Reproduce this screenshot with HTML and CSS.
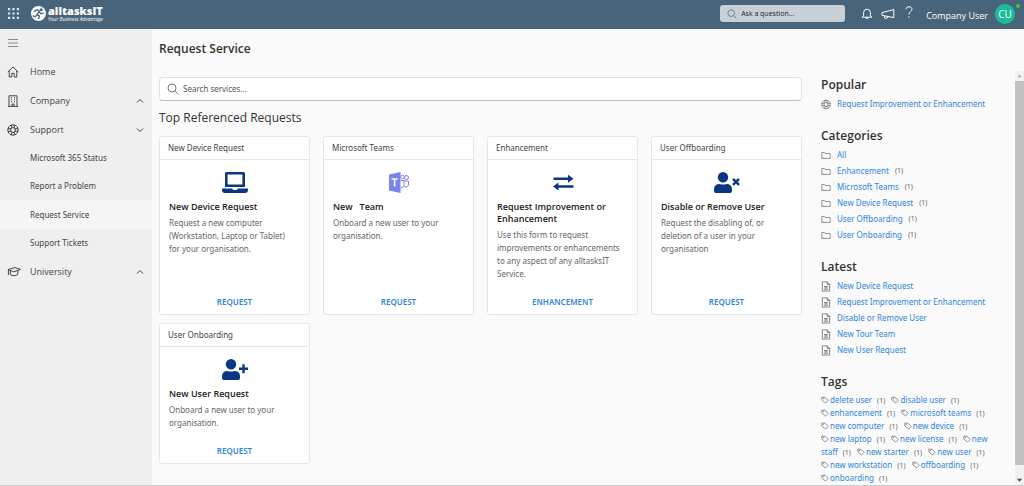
FILE: index.html
```
<!DOCTYPE html>
<html lang="en">
<head>
<meta charset="utf-8">
<title>Request Service</title>
<link rel="stylesheet" href="styles.css">
</head>
<body>
<svg class="sprite" aria-hidden="true">
  <symbol id="i-search" viewBox="0 0 12 12"><circle cx="5" cy="5" r="4"/><path d="M8 8l3.3 3.3"/></symbol>
  <symbol id="i-up" viewBox="0 0 8 8"><path d="M1 5.5l3-3 3 3"/></symbol>
  <symbol id="i-down" viewBox="0 0 8 8"><path d="M1 2.5l3 3 3-3"/></symbol>
  <symbol id="i-ring" viewBox="0 0 12 12"><circle cx="6" cy="6" r="5.2"/><circle cx="6" cy="6" r="2.4"/><path d="M4.7 1v3M7.3 1v3M4.7 8v3M7.3 8v3M1 4.7h3M1 7.3h3M8 4.7h3M8 7.3h3"/></symbol>
  <symbol id="i-folder" viewBox="0 0 12 10"><path d="M1 8.5v-7h3.6l1 1.2H11v5.8z"/></symbol>
  <symbol id="i-doc" viewBox="0 0 10 12"><path d="M1 1h5.5L9 3.5V11H1zM6.3 1v2.7H9M3 6h4M3 7.5h4M3 9h4"/></symbol>
  <symbol id="i-tag" viewBox="0 0 10 10"><path d="M1 1.5h4l4 4-3.3 3.3L1 5z"/><circle cx="3" cy="3.3" r=".4"/></symbol>
</svg>

<header class="topbar">
  <button class="plain" aria-label="Apps">
    <svg class="apps" viewBox="0 0 12 12"><path d="M0 0h2.4v2.4H0zM4.8 0h2.4v2.4H4.8zM9.6 0H12v2.4H9.6zM0 4.8h2.4v2.4H0zM4.8 4.8h2.4v2.4H4.8zM9.6 4.8H12v2.4H9.6zM0 9.6h2.4V12H0zM4.8 9.6h2.4V12H4.8zM9.6 9.6H12V12H9.6z"/></svg>
  </button>
  <a class="brand" href="#">
    <svg class="brand-mark" viewBox="0 0 16 16"><circle class="disc" cx="8" cy="8" r="8"/><circle class="head" cx="10.800" cy="4" r="1.700"/><path d="M3 6l3.500-2 2.800 2M8.800 6L6.500 9.200 9 10.800 8 13.800M6.500 9.500L4.200 11.500 2 10.200M9 6.500l1.800 1.800 2.800-1"/></svg>
    <span class="brand-text"><b>alltasksIT</b><i>Your Business Advantage</i></span>
  </a>
  <label class="ask"><svg class="line"><use href="#i-search"/></svg><input type="text" placeholder="Ask a question..." aria-label="Ask a question"></label>
  <div class="tools">
    <button class="plain" aria-label="Notifications"><svg class="line" viewBox="0 0 12 12"><path d="M1.2 9.2h9.6L9.4 7.4V4.6a3.4 3.4 0 0 0-6.8 0v2.8zM4.8 9.4a1.2 1.2 0 0 0 2.400 0"/></svg></button>
    <button class="plain" aria-label="Announcements"><svg class="line wide" viewBox="0 0 14 12"><path d="M1 4.6L12.8 1.6v8L1 7.300zM3.300 8l.8 2.700 3.200-1.500"/></svg></button>
    <button class="plain" aria-label="Help"><svg class="line help" viewBox="0 0 8 12"><path d="M1 3.2C1 1.6 2.3.8 4 .8s3 .9 3 2.500C7 5.4 4 5.6 4 8.4M4 10.2v1.4"/></svg></button>
  </div>
  <a class="user" href="#">Company User</a>
  <span class="avatar">CU<span class="online"></span></span>
</header>

<div class="shell">
  <nav class="side">
    <button class="plain burger" aria-label="Menu"><svg class="line" viewBox="0 0 10 10"><path d="M0 1.5h10M0 5h10M0 8.500h10"/></svg></button>
    <a class="item" href="#"><svg class="line" viewBox="0 0 12 12"><path d="M.8 6L6 1l5.2 5M2.2 5v6h2.6V7.3h2.4V11h2.6V5"/></svg><span>Home</span></a>
    <a class="item" href="#"><svg class="line" viewBox="0 0 12 12"><path d="M2 11.5V.8h8v10.7M1 11.4h10M4 2.8h1M7 2.8h1M4 4.8h1M7 4.8h1M4 6.8h1M7 6.8h1M5 11.4V9h2v2.4"/></svg><span>Company</span><svg class="line chev"><use href="#i-up"/></svg></a>
    <a class="item" href="#"><svg class="line"><use href="#i-ring"/></svg><span>Support</span><svg class="line chev"><use href="#i-down"/></svg></a>
    <a class="item sub" href="#">Microsoft 365 Status</a>
    <a class="item sub" href="#">Report a Problem</a>
    <a class="item sub active" href="#">Request Service</a>
    <a class="item sub" href="#">Support Tickets</a>
    <a class="item" href="#"><svg class="line grad" viewBox="0 0 14 12"><path d="M1 3.6L8 1.6l5.4 1.8-6.6 2.4zM3.4 4.6v4c1.6 1.6 5.8 1.4 7.4-.2V4.6M1.4 4v5"/></svg><span>University</span><svg class="line chev"><use href="#i-up"/></svg></a>
  </nav>

  <main class="page">
    <h1>Request Service</h1>
    <div class="columns">
      <section class="catalog">
        <label class="search"><svg class="line"><use href="#i-search"/></svg><input type="text" placeholder="Search services..." aria-label="Search services"></label>
        <h2>Top Referenced Requests</h2>
        <div class="cards">
          <article class="card">
            <header>New Device Request</header>
            <svg class="pic" viewBox="0 0 26 21"><path fill-rule="evenodd" d="M4.6 0h16.8Q23 0 23 1.6V15H3V1.6Q3 0 4.6 0zM5.6 2.6v9.8h14.8V2.6zM0 16.5h10.2q.3 1.4 1.2 1.4h3.2q.9 0 1.2-1.4H26v1.2Q26 21 23 21H3Q0 21 0 17.700z"/></svg>
            <h3>New Device Request</h3>
            <p>Request a new computer (Workstation, Laptop or Tablet) for your organisation.</p>
            <a href="#">REQUEST</a>
          </article>
          <article class="card">
            <header>Microsoft Teams</header>
            <svg class="pic teams" viewBox="0 0 26 21"><path d="M3 2.400L14.500 0v21L3 18.400z"/><path class="tee" d="M5.600 7h6M8.600 7v7.500"/><g class="people"><circle cx="16.500" cy="5" r="1.800"/><circle cx="20.500" cy="5.500" r="2"/><path d="M14.500 8.500h3.500v5q-1 2.500-3.500 2.500M18 9h4.500v4q-1 2.500-4.500 2"/></g></svg>
            <h3>New &nbsp; Team</h3>
            <p>Onboard a new user to your organisation.</p>
            <a href="#">REQUEST</a>
          </article>
          <article class="card">
            <header>Enhancement</header>
            <svg class="pic" viewBox="0 0 26 21"><path d="M3.500 5.600H18V2.800L23.500 6.800 18 10.800V8H3.500zM23.500 15.700H8.500v2.800L3 14.500l5.500-4v2.800h15z"/></svg>
            <h3>Request Improvement or Enhancement</h3>
            <p>Use this form to request improvements or enhancements to any aspect of any alltasksIT Service.</p>
            <a href="#">ENHANCEMENT</a>
          </article>
          <article class="card">
            <header>User Offboarding</header>
            <svg class="pic" viewBox="0 0 26 21"><circle cx="9" cy="5.300" r="5.200"/><path d="M0 19v-1.500Q0 12 5.500 12q3.500 1.200 7 0Q18 12 18 17.500V19q0 2-2 2H2q-2 0-2-2z"/><path class="mark" d="M19 6.800l6 6M25 6.800l-6 6"/></svg>
            <h3>Disable or Remove User</h3>
            <p>Request the disabling of, or deletion of a user in your organisation</p>
            <a href="#">REQUEST</a>
          </article>
          <article class="card">
            <header>User Onboarding</header>
            <svg class="pic" viewBox="0 0 26 21"><circle cx="9" cy="5.300" r="5.200"/><path d="M0 19v-1.500Q0 12 5.500 12q3.500 1.200 7 0Q18 12 18 17.500V19q0 2-2 2H2q-2 0-2-2z"/><path class="mark" d="M21.500 5.300v9M17 9.800h9"/></svg>
            <h3>New User Request</h3>
            <p>Onboard a new user to your organisation.</p>
            <a href="#">REQUEST</a>
          </article>
        </div>
      </section>

      <aside class="rail">
        <section>
          <h4>Popular</h4>
          <ul>
            <li><svg class="line"><use href="#i-ring"/></svg><a href="#">Request Improvement or Enhancement</a></li>
          </ul>
        </section>
        <section>
          <h4>Categories</h4>
          <ul>
            <li><svg class="line"><use href="#i-folder"/></svg><a href="#">All</a></li>
            <li><svg class="line"><use href="#i-folder"/></svg><a href="#">Enhancement</a><small>(1)</small></li>
            <li><svg class="line"><use href="#i-folder"/></svg><a href="#">Microsoft Teams</a><small>(1)</small></li>
            <li><svg class="line"><use href="#i-folder"/></svg><a href="#">New Device Request</a><small>(1)</small></li>
            <li><svg class="line"><use href="#i-folder"/></svg><a href="#">User Offboarding</a><small>(1)</small></li>
            <li><svg class="line"><use href="#i-folder"/></svg><a href="#">User Onboarding</a><small>(1)</small></li>
          </ul>
        </section>
        <section>
          <h4>Latest</h4>
          <ul>
            <li><svg class="line"><use href="#i-doc"/></svg><a href="#">New Device Request</a></li>
            <li><svg class="line"><use href="#i-doc"/></svg><a href="#">Request Improvement or Enhancement</a></li>
            <li><svg class="line"><use href="#i-doc"/></svg><a href="#">Disable or Remove User</a></li>
            <li><svg class="line"><use href="#i-doc"/></svg><a href="#">New Tour Team</a></li>
            <li><svg class="line"><use href="#i-doc"/></svg><a href="#">New User Request</a></li>
          </ul>
        </section>
        <section>
          <h4>Tags</h4>
          <div class="tags">
            <span><svg class="line"><use href="#i-tag"/></svg><a href="#">delete user</a><small>(1)</small></span>
            <span><svg class="line"><use href="#i-tag"/></svg><a href="#">disable user</a><small>(1)</small></span>
            <span><svg class="line"><use href="#i-tag"/></svg><a href="#">enhancement</a><small>(1)</small></span>
            <span><svg class="line"><use href="#i-tag"/></svg><a href="#">microsoft teams</a><small>(1)</small></span>
            <span><svg class="line"><use href="#i-tag"/></svg><a href="#">new computer</a><small>(1)</small></span>
            <span><svg class="line"><use href="#i-tag"/></svg><a href="#">new device</a><small>(1)</small></span>
            <span><svg class="line"><use href="#i-tag"/></svg><a href="#">new laptop</a><small>(1)</small></span>
            <span><svg class="line"><use href="#i-tag"/></svg><a href="#">new license</a><small>(1)</small></span>
            <span class="split"><svg class="line"><use href="#i-tag"/></svg><a href="#">new staff</a><small>(1)</small></span>
            <span><svg class="line"><use href="#i-tag"/></svg><a href="#">new starter</a><small>(1)</small></span>
            <span><svg class="line"><use href="#i-tag"/></svg><a href="#">new user</a><small>(1)</small></span>
            <span><svg class="line"><use href="#i-tag"/></svg><a href="#">new workstation</a><small>(1)</small></span>
            <span><svg class="line"><use href="#i-tag"/></svg><a href="#">offboarding</a><small>(1)</small></span>
            <span><svg class="line"><use href="#i-tag"/></svg><a href="#">onboarding</a><small>(1)</small></span>
          </div>
        </section>
      </aside>
    </div>
  </main>
  <div class="scroll" aria-hidden="true">
    <svg viewBox="0 0 10 10"><path class="dim" d="M2.500 6.500L5 3.500l2.500 3z"/></svg>
    <div class="thumb"></div>
    <svg viewBox="0 0 10 10"><path d="M2 3.500L5 7l3-3.500z"/></svg>
  </div>
</div>
</body>
</html>
```
FILE: styles.css
```
* { box-sizing: border-box; }

body {
  margin: 0;
  height: 100vh;
  display: flex;
  flex-direction: column;
  overflow: hidden;
  background: #fafafa;
  color: #333;
  font: 8px/16px "Noto Sans", "Open Sans", sans-serif;
}

h1, h2, h3, h4, p, ul { margin: 0; padding: 0; }
h1, h2, h3, h4, .topbar, .item { font-family: "Open Sans", "Noto Sans", sans-serif; }
ul { list-style: none; }
a { color: #2f86db; text-decoration: none; }
small { font-size: 7px; line-height: 8px; color: #666; }
svg { display: block; flex: none; }
input { border: 0; outline: 0; background: none; font: inherit; padding: 0; min-width: 0; flex: 1; }
input::placeholder { color: #555; opacity: 1; }

.sprite { position: absolute; width: 0; height: 0; }
.plain { border: 0; padding: 0; background: none; display: block; color: inherit; }
.line { width: 12px; height: 12px; fill: none; stroke: currentColor; stroke-width: 1; }

.topbar {
  flex: none;
  display: flex;
  align-items: center;
  height: 29px;
  padding: 0 9px 2px 8px;
  background: #48647a;
  color: #fff;
}
.apps { width: 11px; height: 11px; fill: #dfe6eb; }
.brand { display: flex; align-items: center; gap: 2px; margin-left: 12px; color: #fff; }
.brand-mark { width: 15px; height: 15px; }
.disc { fill: #fff; }
.head { fill: #48647a; }
.brand-mark path { fill: none; stroke: #48647a; stroke-width: 1.4; }
.brand-text { display: flex; flex-direction: column; }
.brand-text b { font-size: 11px; line-height: 11px; font-weight: 800; }
.brand-text i { font-size: 5px; line-height: 6px; }
.ask {
  display: flex;
  align-items: center;
  gap: 4px;
  width: 125px;
  height: 17px;
  margin-left: auto;
  padding: 0 7px;
  border-radius: 3px;
  background: #c8d0d7;
  color: #62717c;
}
.ask svg { width: 10px; height: 10px; }
.ask input { font-size: 7px; }
.ask input::placeholder { color: #222; }
.tools { display: flex; align-items: center; gap: 8px; margin-left: 16px; color: #fff; }
.tools .wide { width: 14px; }
.tools .help { width: 8px; margin: 0 0 3px 2px; }
.user { margin-left: 13px; padding-top: 4px; font-size: 9px; color: #fff; }
.avatar {
  position: relative;
  display: grid;
  place-items: center;
  width: 20px;
  height: 20px;
  margin-left: 7px;
  border-radius: 50%;
  background: #1abc9c;
  font-size: 10px;
}
.online { position: absolute; top: 0; right: -5px; width: 4px; height: 4px; border-radius: 50%; background: #2fd12f; }

.shell { flex: 1; min-height: 0; display: flex; border-bottom: 1px solid #ccc; }
.side { flex: none; width: 152px; background: #efefef; color: #444; }
.burger { height: 28px; padding: 0 8px; color: #888; }
.burger svg { width: 10px; height: 10px; }
.item { display: flex; align-items: center; gap: 11px; height: 29px; padding: 0 8px 0 7px; font-size: 9px; color: #444; }
.item span { flex: 1; }
.item .chev { width: 8px; height: 8px; }
.item .grad { width: 14px; margin-right: -2px; }
.item.sub { height: 28px; padding-left: 30px; font-family: "Noto Sans", "Open Sans", sans-serif; font-size: 8px; }
.item.active { height: 29px; background: #f5f5f5; }

.page { flex: 1; min-width: 0; padding: 11px 6px 0 7px; }
h1 { font-size: 12px; line-height: 18px; font-weight: 600; color: #333; margin-bottom: 19px; }
.columns { display: flex; gap: 19px; }
.catalog { flex: 1; min-width: 0; }
.search {
  display: flex;
  align-items: center;
  gap: 4px;
  height: 24px;
  padding: 0 7px;
  border: 1px solid #e0e0e0;
  border-bottom-color: #bbb;
  border-radius: 4px;
  background: #fff;
  color: #777;
}
h2 { font-size: 12px; line-height: 18px; font-weight: 400; margin: 8px 0 9px; color: #333; }
.cards { display: grid; grid-template-columns: repeat(4, 1fr); gap: 8px 13px; }
.card {
  display: flex;
  flex-direction: column;
  padding-bottom: 4px;
  border: 1px solid #e4e7ea;
  border-radius: 3px;
  background: #fff;
}
.card header { padding: 3px 8px; border-bottom: 1px solid #e4e7ea; color: #444; }
.pic { width: 26px; height: 21px; margin: 12px auto 8px; fill: #0b3782; }
.pic .mark { stroke: #0b3782; stroke-width: 2.400; }
.teams { fill: #7b83eb; }
.teams .tee { stroke: #fff; stroke-width: 1.600; }
.teams .people { fill: none; stroke: #7b83eb; stroke-width: 1; }
.card h3 { padding: 0 9px; font-size: 9px; line-height: 12px; font-weight: 600; color: #222; }
.card p { padding: 3px 14px 14px 9px; line-height: 13px; color: #666; }
.card > a { margin-top: auto; text-align: center; font-weight: 600; }

.rail { flex: none; width: 188px; }
.rail section { margin-bottom: 16px; }
.rail section:last-child { margin-bottom: 0; }
.rail h4 { font-size: 12px; line-height: 16px; font-weight: 600; margin-bottom: 3px; }
.rail li { display: flex; align-items: center; gap: 6px; white-space: nowrap; color: #777; }
.rail li svg { width: 10px; height: 11px; }
.tags { line-height: 13px; padding-right: 12px; color: #777; }
.tags svg { display: inline-block; width: 8px; height: 8px; margin-right: 1px; vertical-align: -1px; }
.tags span { margin-right: 4px; white-space: nowrap; }
.tags .split { white-space: normal; }
.tags small { margin-left: 5px; }

.scroll { flex: none; width: 9px; margin-top: 42px; display: flex; flex-direction: column; background: #f1f1f1; }
.scroll svg { width: 9px; height: 10px; fill: #505050; }
.scroll .dim { fill: #a3a3a3; }
.thumb { flex: 1; background: #c1c1c1; margin-bottom: 10px; }
```
